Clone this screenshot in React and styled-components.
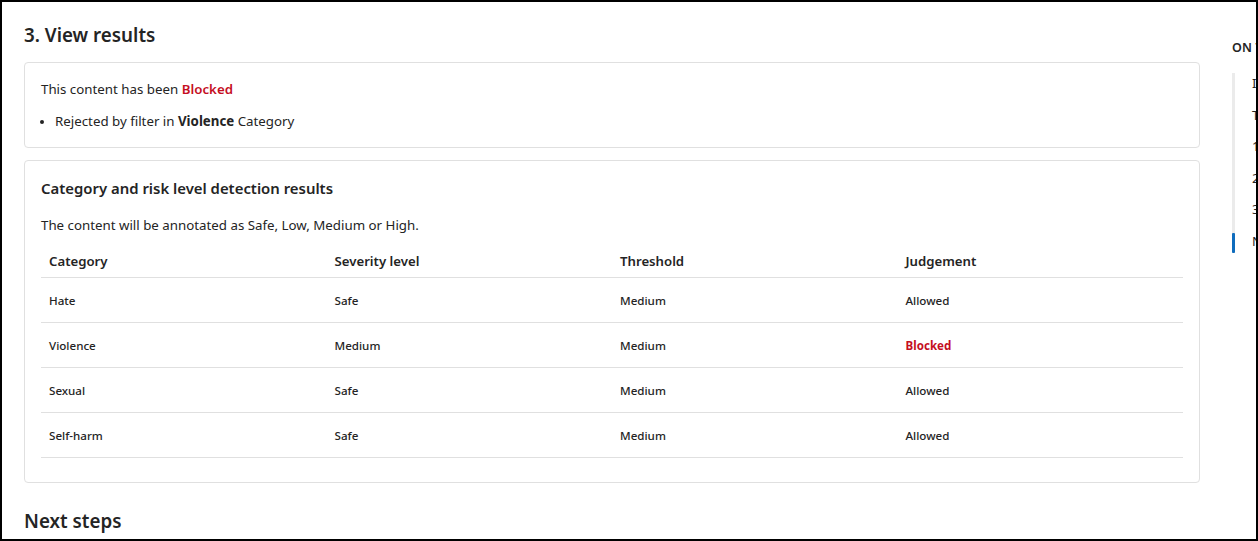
import React from "react";
import styled, { createGlobalStyle } from "styled-components";

const GlobalStyle = createGlobalStyle`
  html, body { margin: 0; padding: 0; background: #ffffff; }
  body {
    font-family: "Segoe UI", "Noto Sans", "Open Sans", sans-serif;
    color: #242424;
    -webkit-font-smoothing: antialiased;
  }
  * { box-sizing: border-box; }
`;

const Frame = styled.div`
  width: 1258px;
  height: 541px;
  border: 2px solid #000000;
  overflow: hidden;
  display: flex;
  gap: 32px;
  padding: 19px 0 0 22px;
  background: #ffffff;
`;

const Main = styled.main`
  flex: 0 0 1176px;
  display: flex;
  flex-direction: column;
`;

const SectionTitle = styled.h2`
  margin: 0 0 ${(p) => p.$gap || 0}px;
  font-size: 18.8px;
  line-height: 28px;
  font-weight: 600;
  color: #242424;
`;

const Card = styled.section`
  border: 1px solid #e0e0e0;
  border-radius: 4px;
  padding: ${(p) => p.$pad};
  margin-bottom: ${(p) => p.$mb || 0}px;
  display: flex;
  flex-direction: column;
`;

const Text = styled.p`
  margin: 0;
  font-size: 13.3px;
  line-height: 20px;
`;

const Red = styled.span`
  color: #c50f1f;
  font-weight: 600;
`;

const BulletList = styled.ul`
  margin: 12px 0 0;
  padding: 0 0 0 14px;
  font-size: 13.3px;
  line-height: 20px;
  li::marker { font-size: 12px; }
  strong { font-weight: 700; }
`;

const CardHeading = styled.h3`
  margin: 0;
  font-size: 14.9px;
  line-height: 22px;
  font-weight: 600;
`;

const Description = styled(Text)`
  margin-top: 16px;
`;

const Table = styled.table`
  margin-top: 10px;
  width: 100%;
  border-collapse: collapse;
  table-layout: fixed;
`;

const Th = styled.th`
  text-align: left;
  font-size: 13.2px;
  line-height: 20px;
  font-weight: 600;
  height: 32px;
  padding: 0 8px;
  vertical-align: middle;
  border-bottom: 1px solid #e0e0e0;
`;

const Td = styled.td`
  font-size: 11.6px;
  line-height: 16px;
  font-weight: ${(p) => (p.$blocked ? 700 : 500)};
  color: ${(p) => (p.$blocked ? "#c50f1f" : "#242424")};
  height: 45px;
  padding: 2px 8px 0;
  vertical-align: middle;
  border-bottom: 1px solid #e0e0e0;
`;

const Nav = styled.nav`
  flex: 0 0 220px;
  padding-top: 18px;
`;

const NavTitle = styled.div`
  font-size: 12.5px;
  line-height: 18px;
  font-weight: 600;
  letter-spacing: 0.2px;
  color: #242424;
`;

const NavList = styled.ul`
  position: relative;
  list-style: none;
  margin: 11px 0 0;
  padding: 0;
  &::before {
    content: "";
    position: absolute;
    left: 0;
    top: 5px;
    bottom: 5px;
    width: 3px;
    background: #ebebeb;
  }
`;

const NavItem = styled.li`
  position: relative;
  height: 31.6px;
  line-height: 31.6px;
  padding-left: 20px;
  font-size: 13.3px;
  white-space: nowrap;
  color: #242424;
  &::before {
    content: "";
    display: ${(p) => (p.$active ? "block" : "none")};
    position: absolute;
    left: 0;
    top: 7px;
    bottom: 5px;
    width: 3px;
    border-radius: 1px;
    background: #0f6cbd;
  }
`;

const rows = [
  { category: "Hate", severity: "Safe", threshold: "Medium", judgement: "Allowed" },
  { category: "Violence", severity: "Medium", threshold: "Medium", judgement: "Blocked" },
  { category: "Sexual", severity: "Safe", threshold: "Medium", judgement: "Allowed" },
  { category: "Self-harm", severity: "Safe", threshold: "Medium", judgement: "Allowed" },
];

const navItems = [
  "In this article",
  "Try it out",
  "1. Select a sample",
  "2. Configure filters",
  "3. View results",
  "Next steps",
];

export default function App() {
  return (
    <>
      <GlobalStyle />
      <Frame>
        <Main>
          <SectionTitle $gap={13}>3. View results</SectionTitle>
          <Card $pad="16px 16px 16px" $mb={12}>
            <Text>
              This content has been <Red>Blocked</Red>
            </Text>
            <BulletList>
              <li>
                Rejected by filter in <strong>Violence</strong> Category
              </li>
            </BulletList>
          </Card>
          <Card $pad="16px 16px 24px" $mb={24}>
            <CardHeading>Category and risk level detection results</CardHeading>
            <Description>The content will be annotated as Safe, Low, Medium or High.</Description>
            <Table>
              <thead>
                <tr>
                  <Th>Category</Th>
                  <Th>Severity level</Th>
                  <Th>Threshold</Th>
                  <Th>Judgement</Th>
                </tr>
              </thead>
              <tbody>
                {rows.map((r) => (
                  <tr key={r.category}>
                    <Td>{r.category}</Td>
                    <Td>{r.severity}</Td>
                    <Td>{r.threshold}</Td>
                    <Td $blocked={r.judgement === "Blocked"}>{r.judgement}</Td>
                  </tr>
                ))}
              </tbody>
            </Table>
          </Card>
          <SectionTitle>Next steps</SectionTitle>
        </Main>
        <Nav>
          <NavTitle>ON THIS PAGE</NavTitle>
          <NavList>
            {navItems.map((n, i) => (
              <NavItem key={n} $active={i === navItems.length - 1}>
                {n}
              </NavItem>
            ))}
          </NavList>
        </Nav>
      </Frame>
    </>
  );
}
